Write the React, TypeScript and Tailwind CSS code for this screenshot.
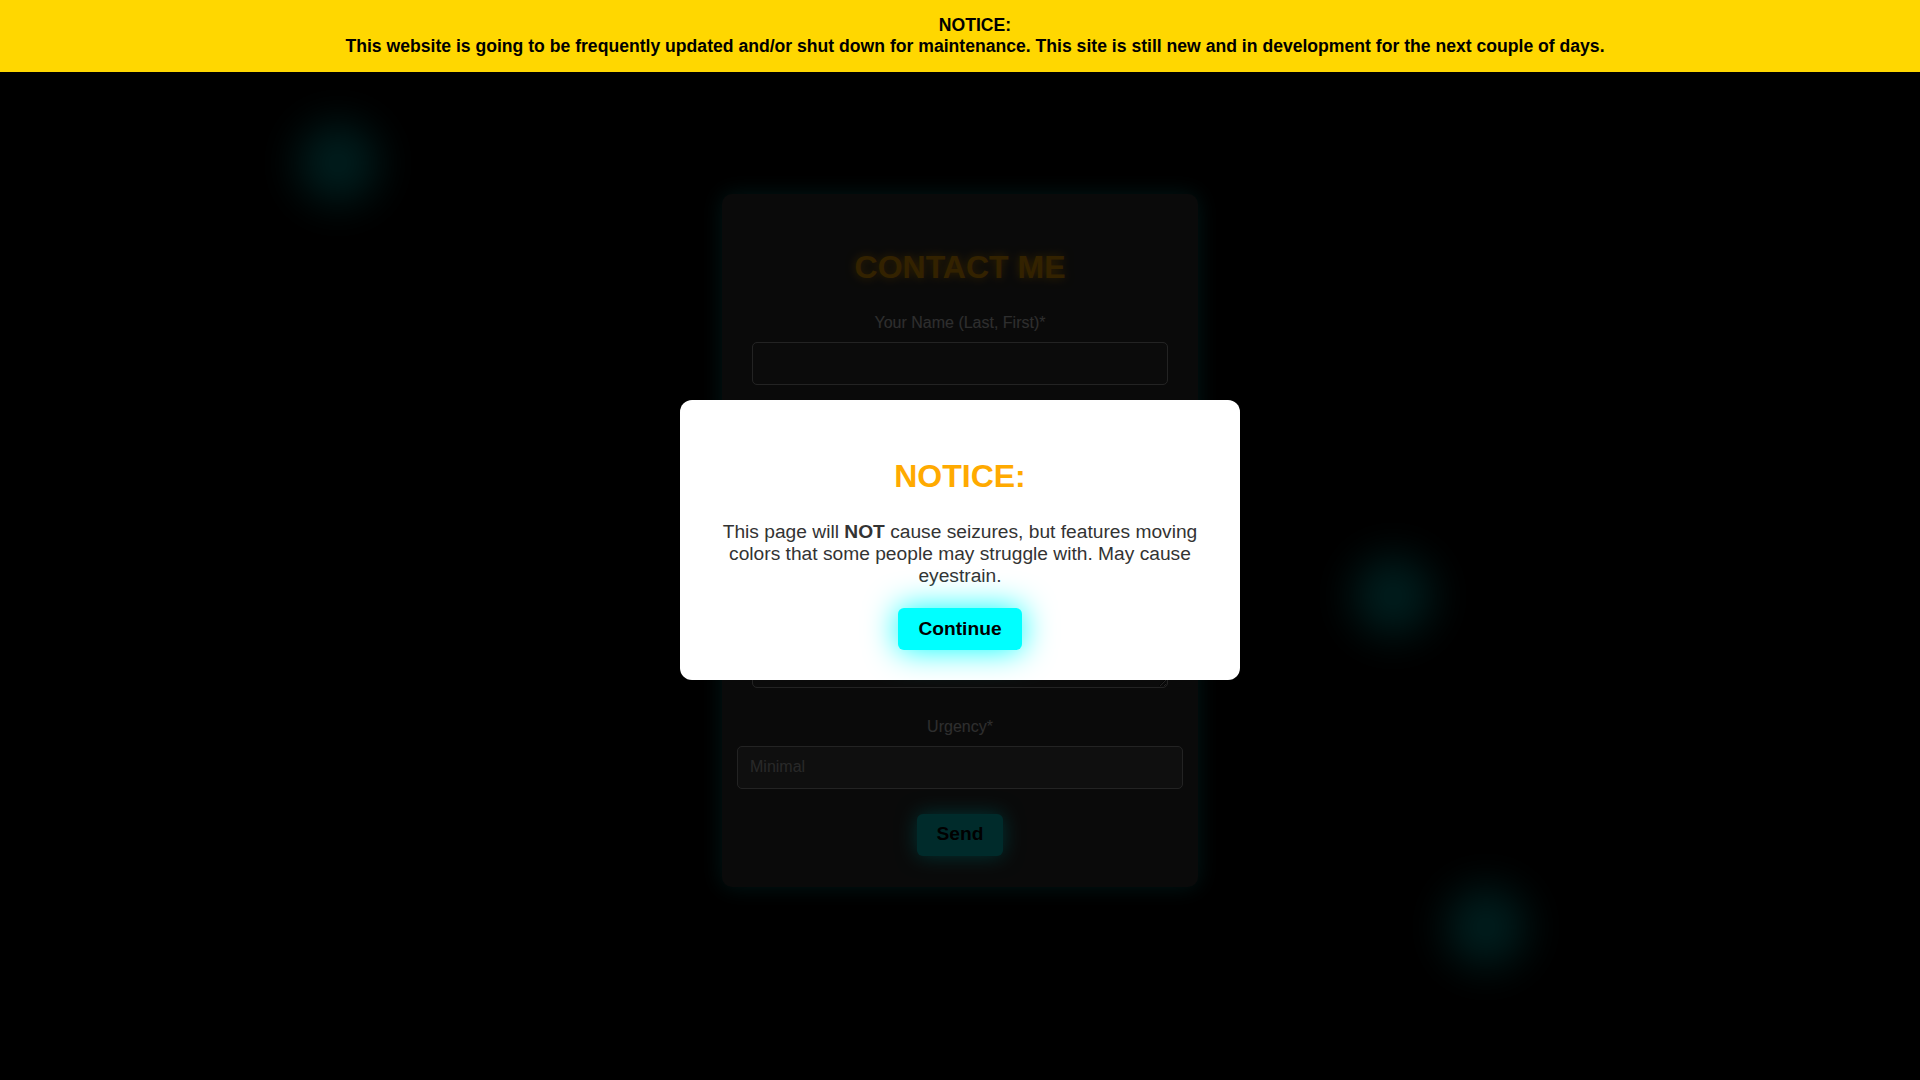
import { useState } from "react";

const font = { fontFamily: '"Liberation Sans", Arial, sans-serif' };

function Field({ label, children }: { label: string; children: React.ReactNode }) {
  return (
    <div className="flex flex-col">
      <label className="text-[16px] leading-[18px] text-[#e6e6e6] mb-[10px]">{label}</label>
      {children}
    </div>
  );
}

export default function App() {
  const [open, setOpen] = useState(true);

  return (
    <div className="min-h-screen bg-black relative overflow-hidden" style={font}>
      {/* Top notice */}
      <div className="fixed top-0 left-0 right-0 z-50 bg-[#ffd700] py-[15px] pl-[30px] text-center text-black font-bold text-[17.6px] leading-[21px]">
        <div>NOTICE:</div>
        <div>
          This website is going to be frequently updated and/or shut down for maintenance. This site is
          still new and in development for the next couple of days.
        </div>
      </div>

      {/* Floating glow orbs */}
      <div className="absolute left-[298px] top-[123px] w-[80px] h-[80px] rounded-full bg-[#00e0e0] blur-[22px] opacity-70" />
      <div className="absolute left-[1353px] top-[556px] w-[80px] h-[80px] rounded-full bg-[#00e0e0] blur-[22px] opacity-70" />
      <div className="absolute left-[1446px] top-[887px] w-[80px] h-[80px] rounded-full bg-[#00e0e0] blur-[22px] opacity-70" />

      {/* Contact form */}
      <main className="min-h-screen flex items-center justify-center relative">
        <form className="w-[476px] bg-[#323232] rounded-[10px] px-[30px] pt-[30px] pb-[31px] shadow-[0_0_22px_rgba(0,255,255,0.45)] text-center">
          <h1 className="mt-[25px] mb-[28px] text-[32px] leading-[37px] font-bold text-[#ffaa00] [text-shadow:0_0_10px_#ffaa00]">
            CONTACT ME
          </h1>
          <div className="flex flex-col gap-[30px]">
            <Field label="Your Name (Last, First)*">
              <input className="h-[43px] w-full rounded-[5px] border border-[#b0b0b0] bg-[#3a3a3a] px-[12px] text-[16px] text-[#ddd] outline-none" />
            </Field>
            <Field label="Your Email*">
              <input className="h-[43px] w-full rounded-[5px] border border-[#b0b0b0] bg-[#3a3a3a] px-[12px] text-[16px] text-[#ddd] outline-none" />
            </Field>
            <Field label="Message*">
              <textarea className="h-[144px] w-full rounded-[5px] border border-[#b0b0b0] bg-[#3a3a3a] px-[12px] py-[10px] text-[16px] text-[#ddd] outline-none" />
            </Field>
            <Field label="Urgency*">
              <select className="appearance-none h-[43px] -mx-[15px] rounded-[5px] border border-[#b0b0b0] bg-[#4a4a4a] pl-[12px] text-[16px] text-[#c8c8c8] outline-none">
                <option>Minimal</option>
                <option>Moderate</option>
                <option>Urgent</option>
              </select>
            </Field>
          </div>
          <button
            type="button"
            className="mt-[25px] h-[42px] w-[86px] rounded-[6px] bg-[#00d8d8] text-[19.2px] font-bold text-black shadow-[0_0_20px_#00ffff]"
          >
            Send
          </button>
        </form>
      </main>

      {open && (
        <>
          <div className="fixed inset-0 z-40 bg-black/80" />
          <div className="fixed inset-0 z-40 flex items-center justify-center">
            <div className="w-[560px] bg-white rounded-[12px] px-[30px] pt-[30px] pb-[30px] text-center">
              <h2 className="mt-[28px] mb-[26px] text-[32px] leading-[37px] font-bold text-[#ffaa00]">NOTICE:</h2>
              <p className="text-[19.2px] leading-[22px] text-[#333]">
                This page will <strong>NOT</strong> cause seizures, but features moving colors that some
                people may struggle with. May cause eyestrain.
              </p>
              <button
                type="button"
                onClick={() => setOpen(false)}
                className="mt-[21px] h-[42px] w-[124px] rounded-[6px] bg-[#00ffff] text-[19.2px] font-bold text-black shadow-[0_0_32px_#00ffff]"
              >
                Continue
              </button>
            </div>
          </div>
        </>
      )}
    </div>
  );
}
